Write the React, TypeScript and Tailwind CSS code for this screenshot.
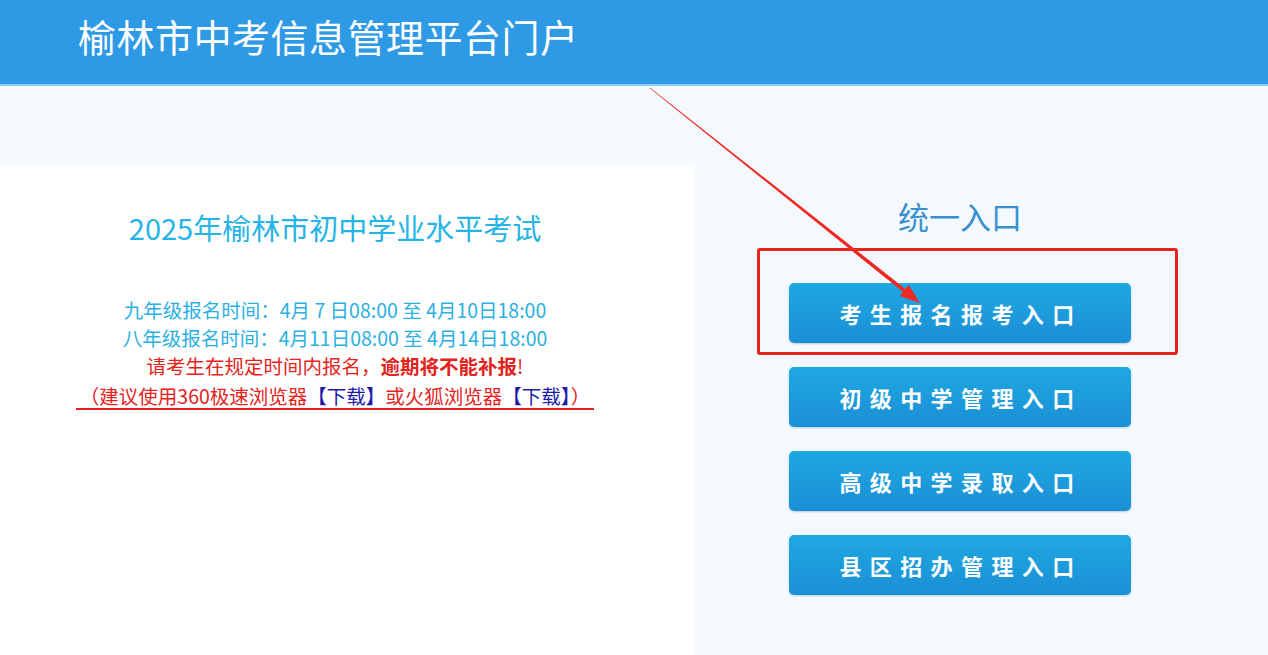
import React from 'react';

const entries = ['考生报名报考入口', '初级中学管理入口', '高级中学录取入口', '县区招办管理入口'];

const font = { fontFamily: '"Microsoft YaHei", "Noto Sans CJK SC", "Noto Sans", sans-serif' };

export default function App() {
  return (
    <div className="relative min-h-[655px] w-[1268px] overflow-hidden bg-[#f4f9fe]" style={font}>
      <header className="flex h-[86px] items-center border-b-2 border-[#8fccf3] bg-[#2e9ae6] pl-[78px]">
        <h1 className="-mt-[12px] text-[38px] leading-none font-normal tracking-[0.5px] text-white">榆林市中考信息管理平台门户</h1>
      </header>

      <div className="flex">
        <section className="mt-[79px] h-[520px] w-[695px] bg-white pt-[44px]">
          <div className="w-[670px] text-center">
            <h2 className="text-[29px] leading-[36px] text-[#25b4e6]">2025年榆林市初中学业水平考试</h2>
            <div className="mt-[51px] text-[19.5px] leading-[28px]">
              <p className="text-[#2ab0e2]">九年级报名时间：4月 7 日08:00 至 4月10日18:00</p>
              <p className="text-[#2ab0e2]">八年级报名时间：4月11日08:00 至 4月14日18:00</p>
              <p className="text-[#e3231c]">
                请考生在规定时间内报名，<b className="font-bold">逾期将不能补报</b>!
              </p>
              <p className="mt-[2px]">
                <span className="inline-block border-b-2 border-[#e3231c] px-[4px] leading-[24px] text-[#e3231c]">
                  （建议使用360极速浏览器<span className="text-[#1c1ca8]">【下载】</span>或火狐浏览器<span className="text-[#1c1ca8]">【下载】</span>）
                </span>
              </p>
            </div>
          </div>
        </section>

        <section className="ml-[94px] flex w-[342px] flex-col items-center pt-[110px]">
          <div className="text-[31px] leading-[40px] text-[#3a90cf]">统一入口</div>
          <div className="mt-[47px] flex w-full flex-col gap-[24px]">
            {entries.map((t, i) => (
              <div key={t} className="relative">
                {i === 0 && (
                  <div className="absolute -top-[35px] -left-[32px] h-[107px] w-[421px] rounded-[3px] border-[3px] border-[#e8231d]" />
                )}
                <button className="relative flex h-[60px] w-full items-center justify-center rounded-[5px] bg-gradient-to-b from-[#1fa8e2] to-[#1b8fd5] pl-[2px] text-[22px] font-bold tracking-[8.4px] text-white shadow-[0_1px_2px_rgba(0,60,120,0.25)]">
                  {t}
                </button>
              </div>
            ))}
          </div>
        </section>
      </div>

      <svg className="pointer-events-none absolute top-0 left-0" width="1268" height="655">
        <polygon
          points="650.2,87.8 905.5,288.9 908.7,285.0 920,303 899.9,296.0 903.1,292.1 649.8,88.2"
          fill="#ee2a22"
        />
      </svg>
    </div>
  );
}
